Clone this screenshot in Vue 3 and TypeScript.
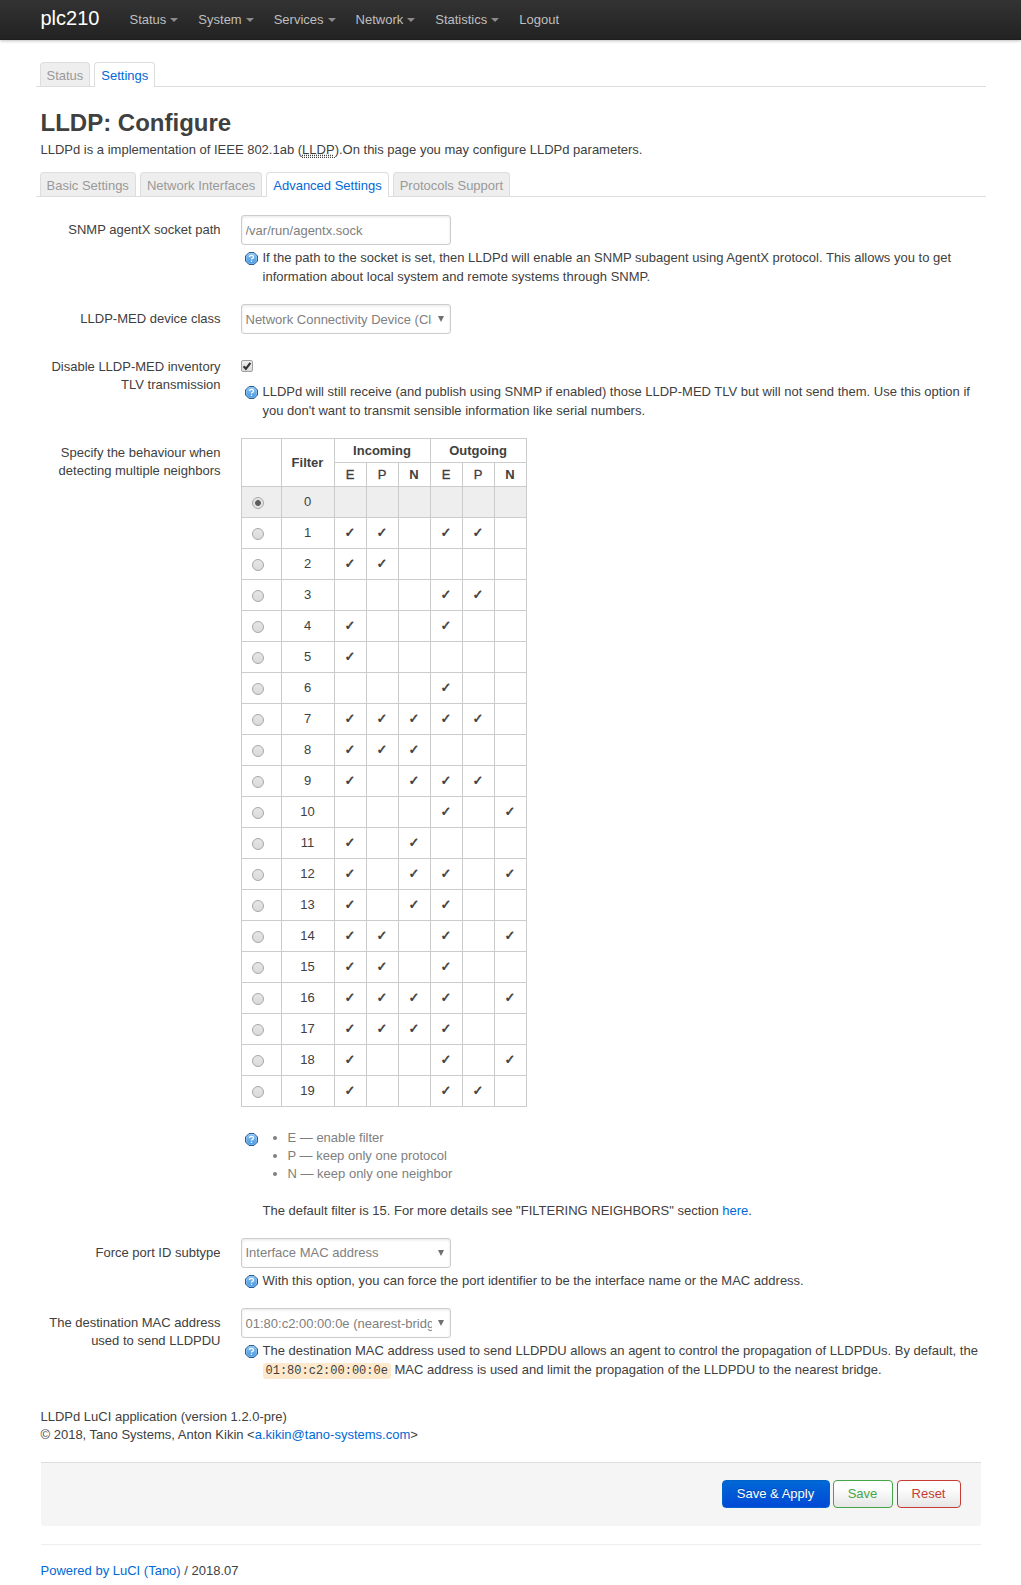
<script setup lang="ts">
interface MenuItem {
  label: string
  dropdown: boolean
}

const menu: MenuItem[] = [
  { label: 'Status', dropdown: true },
  { label: 'System', dropdown: true },
  { label: 'Services', dropdown: true },
  { label: 'Network', dropdown: true },
  { label: 'Statistics', dropdown: true },
  { label: 'Logout', dropdown: false },
]

const pageTabs = ['Status', 'Settings']
const sectionTabs = ['Basic Settings', 'Network Interfaces', 'Advanced Settings', 'Protocols Support']

// Six flags per filter: incoming E, P, N followed by outgoing E, P, N
const filters: string[] = [
  '000000',
  '110110',
  '110000',
  '000110',
  '100100',
  '100000',
  '000100',
  '111110',
  '111000',
  '101110',
  '000101',
  '101000',
  '101101',
  '101100',
  '110101',
  '110100',
  '111101',
  '111100',
  '100101',
  '100110',
]
const selectedFilter = 0
</script>

<template>
  <svg class="defs" width="0" height="0" aria-hidden="true">
    <defs>
      <linearGradient id="help-fill" x1="0" y1="0" x2="0" y2="1">
        <stop offset="0" stop-color="#8cc4f2" />
        <stop offset="1" stop-color="#4596e0" />
      </linearGradient>
      <symbol id="help" viewBox="0 0 13 13">
        <path d="M4 .5h5L12.5 4v5L9 12.5H4L.5 9V4z" fill="url(#help-fill)" stroke="#2c5c8e" />
        <path d="M4.300 1.500h4.400l2.800 2.800v4.400l-2.800 2.800H4.300L1.500 8.700V4.300z" fill="none" stroke="#a5d3f7" stroke-opacity=".55" stroke-width=".8" />
        <path d="M4.500 5q0-1.600 2-1.600t2 1.500q0 .9-1 1.400t-1 1.200M6.500 8.700v1.300" fill="none" stroke="#fff" stroke-width="1.300" />
      </symbol>
    </defs>
  </svg>

  <header class="topbar">
    <div class="container bar">
      <a class="brand">plc210</a>
      <nav class="menu">
        <a v-for="m in menu" :key="m.label">{{ m.label }}<i v-if="m.dropdown" class="caret"></i></a>
      </nav>
    </div>
  </header>

  <main class="container">
    <ul class="tabs first">
      <li v-for="t in pageTabs" :key="t" :class="{ active: t === 'Settings' }">{{ t }}</li>
    </ul>

    <h2>LLDP: Configure</h2>
    <p class="descr">LLDPd is a implementation of IEEE 802.1ab (<abbr>LLDP</abbr>).On this page you may configure LLDPd parameters.</p>

    <ul class="tabs second">
      <li v-for="t in sectionTabs" :key="t" :class="{ active: t === 'Advanced Settings' }">{{ t }}</li>
    </ul>

    <section class="row r1">
      <label>SNMP agentX socket path</label>
      <div class="field">
        <div class="control"><span class="value">/var/run/agentx.sock</span></div>
        <div class="help">
          <svg class="icon"><use href="#help" /></svg>
          <p class="wide">If the path to the socket is set, then LLDPd will enable an SNMP subagent using AgentX protocol. This allows you to get<br />information about local system and remote systems through SNMP.</p>
        </div>
      </div>
    </section>

    <section class="row r2">
      <label>LLDP-MED device class</label>
      <div class="field">
        <div class="control"><span class="value">Network Connectivity Device (Class IV)</span><i class="arrow"></i></div>
      </div>
    </section>

    <section class="row r3">
      <label>Disable LLDP-MED inventory<br />TLV transmission</label>
      <div class="field">
        <span class="checkbox">
          <svg width="10" height="10" viewBox="0 0 10 10"><path d="M1.600 5.300 3.900 7.800 8.400 1.900" fill="none" stroke="#333" stroke-width="2.200" /></svg>
        </span>
        <div class="help">
          <svg class="icon"><use href="#help" /></svg>
          <p>LLDPd will still receive (and publish using SNMP if enabled) those LLDP-MED TLV but will not send them. Use this option if<br />you don't want to transmit sensible information like serial numbers.</p>
        </div>
      </div>
    </section>

    <section class="row r4">
      <label>Specify the behaviour when<br />detecting multiple neighbors</label>
      <div class="field">
        <table>
          <colgroup>
            <col class="c-radio" /><col class="c-filter" />
            <col v-for="n in 6" :key="n" class="c-flag" />
          </colgroup>
          <thead>
            <tr>
              <th rowspan="2"></th>
              <th rowspan="2">Filter</th>
              <th colspan="3">Incoming</th>
              <th colspan="3">Outgoing</th>
            </tr>
            <tr>
              <th class="light">E</th><th class="light">P</th><th>N</th>
              <th class="light">E</th><th class="light">P</th><th>N</th>
            </tr>
          </thead>
          <tbody>
            <tr v-for="(flags, i) in filters" :key="i" :class="{ selected: i === selectedFilter }">
              <td><span class="radio" :class="{ on: i === selectedFilter }"></span></td>
              <td>{{ i }}</td>
              <td v-for="(f, j) in flags.split('')" :key="j" class="mark">{{ f === '1' ? '✓' : '' }}</td>
            </tr>
          </tbody>
        </table>
        <div class="help legend">
          <svg class="icon"><use href="#help" /></svg>
          <div>
            <ul>
              <li>E — enable filter</li>
              <li>P — keep only one protocol</li>
              <li>N — keep only one neighbor</li>
            </ul>
            <p>The default filter is 15. For more details see "FILTERING NEIGHBORS" section <a>here</a>.</p>
          </div>
        </div>
      </div>
    </section>

    <section class="row r5">
      <label>Force port ID subtype</label>
      <div class="field">
        <div class="control"><span class="value">Interface MAC address</span><i class="arrow"></i></div>
        <div class="help">
          <svg class="icon"><use href="#help" /></svg>
          <p>With this option, you can force the port identifier to be the interface name or the MAC address.</p>
        </div>
      </div>
    </section>

    <section class="row r6">
      <label>The destination MAC address<br />used to send LLDPDU</label>
      <div class="field">
        <div class="control"><span class="value">01:80:c2:00:00:0e (nearest-bridge)</span><i class="arrow"></i></div>
        <div class="help">
          <svg class="icon"><use href="#help" /></svg>
          <p>The destination MAC address used to send LLDPDU allows an agent to control the propagation of LLDPDUs. By default, the<br /><code>01:80:c2:00:00:0e</code> MAC address is used and limit the propagation of the LLDPDU to the nearest bridge.</p>
        </div>
      </div>
    </section>

    <p class="about">LLDPd LuCI application (version 1.2.0-pre)<br />© 2018, Tano Systems, Anton Kikin &lt;<a>a.kikin@tano-systems.com</a>&gt;</p>

    <div class="actions">
      <button class="btn apply">Save &amp; Apply</button>
      <button class="btn save">Save</button>
      <button class="btn reset">Reset</button>
    </div>

    <footer><a>Powered by LuCI (Tano)</a> / 2018.07</footer>
  </main>
</template>

<style>
body {
  background: #fff;
  overflow: hidden;
}
#app {
  height: 1585px;
  overflow: hidden;
  font: 13px/18px "Liberation Sans", Arial, sans-serif;
  color: #404040;
}
</style>

<style scoped>
* { box-sizing: border-box; }
p, ul, h2 { margin: 0; padding: 0; }
a { color: #0069d6; }
.defs { display: block; }

.container { width: 940px; margin: 0 auto; }
.topbar {
  height: 40px;
  background: linear-gradient(#333, #222);
  box-shadow: 0 1px 3px rgba(0, 0, 0, .25), inset 0 -1px 0 rgba(0, 0, 0, .1);
}
.bar { display: flex; }
.brand { width: 79px; color: #fff; font-size: 20px; line-height: 20px; padding-top: 8px; }
.menu { display: flex; }
.menu a { color: #bfbfbf; padding: 11px 10px; display: flex; align-items: center; line-height: 18px; }
.caret {
  border: 4px solid transparent;
  border-top-color: #8c8c8c;
  border-bottom: 0;
  margin-left: 4px;
}

.tabs {
  display: flex;
  gap: 4px;
  list-style: none;
  margin: 0 -5px;
  padding: 0 4px;
  height: 25px;
  border-bottom: 1px solid #ddd;
}
.tabs li {
  height: 24px;
  padding: 0 6px;
  line-height: 25px;
  border: 1px solid #ddd;
  border-bottom: 0;
  border-radius: 4px 4px 0 0;
  background: #eee;
  color: #999;
}
.tabs li.active { height: 25px; background: #fff; color: #0069d6; }
.first { margin-top: 22px; }
.second { margin-top: 13px; }

h2 { margin-top: 18px; font-size: 24px; line-height: 36px; }
.descr { line-height: 18px; }
abbr { border-bottom: 1px dotted #404040; text-decoration: underline dotted; }

.row { display: flex; }
label { width: 180px; flex: none; text-align: right; padding-top: 6px; }
.field { margin-left: 20px; flex: 1; }
.r1 { margin-top: 18px; height: 89px; }
.r2 { height: 48px; }
.r3 { height: 86px; }
.r4 { height: 800px; }
.r5 { height: 70px; }
.r6 { height: 100px; }

.control {
  width: 210px;
  height: 30px;
  border: 1px solid #ccc;
  border-radius: 3px;
  padding: 0 4px;
  display: flex;
  align-items: center;
  color: #808080;
  box-shadow: inset 0 1px 3px rgba(0, 0, 0, .1);
}
.value { width: 186px; flex: none; overflow: hidden; white-space: nowrap; padding-top: 2px; }
.r5 .value { padding-top: 0; }
.arrow {
  border: 3px solid transparent;
  border-top: 6px solid #707070;
  border-bottom: 0;
  margin-left: 6px;
}

.help { display: flex; line-height: 19px; padding-top: 4px; }
.icon { width: 13px; height: 13px; flex: none; margin: 3px 5px 0 4px; display: block; }
.help p { white-space: nowrap; margin-top: -1px; }
.help .wide { letter-spacing: .01px; }

.checkbox {
  display: flex;
  align-items: center;
  justify-content: center;
  width: 12px;
  height: 12px;
  margin-top: 8px;
  border: 1px solid #a0a0a0;
  border-radius: 2px;
  background: linear-gradient(#eee, #dcdcdc);
}
.r3 .help { padding-top: 11px; }

table { border-collapse: collapse; table-layout: fixed; width: 286px; }
.c-radio { width: 40px; }
.c-filter { width: 53px; }
.c-flag { width: 32px; }
th, td { border: 1px solid #ccc; padding: 0; text-align: center; vertical-align: middle; }
th { height: 24px; line-height: 18px; }
th.light { font-weight: normal; -webkit-text-stroke: .3px; }
td { height: 31px; line-height: 18px; }
.selected td { background: #eee; }
.mark { font-family: "DejaVu Sans", sans-serif; -webkit-text-stroke: .5px #333; }
.radio {
  display: block;
  width: 12px;
  height: 12px;
  margin: 2px 0 0 10px;
  border: 1px solid #a8a8a8;
  border-radius: 50%;
  background: linear-gradient(#e6e6e6, #dadada);
}
.radio.on { background: radial-gradient(circle, #5c5c5c 0 2.500px, #e4e4e4 3.300px); }

.legend { padding-top: 22px; line-height: 18px; }
.legend .icon { margin-top: 4px; }
.legend ul { padding-left: 25px; color: #808080; }
.legend p { margin-top: 19px; }

code {
  font: 12px/16px "Liberation Mono", monospace;
  background: #fee9cc;
  padding: 1px 3px;
  border-radius: 3px;
}

.actions {
  margin-top: 18px;
  height: 64px;
  border-top: 1px solid #ddd;
  border-radius: 0 0 3px 3px;
  background: #f5f5f5;
  padding: 17px 20px 0 0;
  display: flex;
  justify-content: flex-end;
}
.btn {
  height: 28px;
  padding: 0;
  border-radius: 4px;
  border: 1px solid;
  font: 13px/18px "Liberation Sans", Arial, sans-serif;
  background: linear-gradient(#fff, #fff 25%, #e6e6e6);
}
.apply { width: 108px; color: #fff; border-color: #0064cd; background: linear-gradient(#0069d6, #0049d6); text-shadow: 0 -1px 0 rgba(0, 0, 0, .25); }
.save { width: 60px; margin-left: 3px; color: #46a546; border-color: #46a546; }
.reset { width: 64px; margin-left: 4px; color: #c43c35; border-color: #c43c35; }

footer { margin-top: 18px; border-top: 1px solid #eee; padding-top: 17px; }
</style>
